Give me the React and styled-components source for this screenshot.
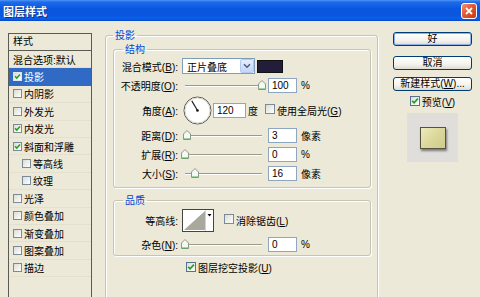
import React from "react";
import styled, { createGlobalStyle } from "styled-components";

const Global = createGlobalStyle`
  html, body { margin: 0; padding: 0; background: #ECE9D8; }
  body {
    font-family: "Liberation Sans", "Noto Sans CJK SC", sans-serif;
    font-size: 10px;
    color: #000;
  }
`;

const CJK = `"Liberation Sans", "Noto Sans CJK SC", sans-serif`;

const Window = styled.div`
  width: 480px;
  height: 297px;
  overflow: hidden;
  display: flex;
  flex-direction: column;
  background: #ECE9D8;
`;

const TitleBar = styled.div`
  height: 21px;
  flex: 0 0 21px;
  display: flex;
  align-items: center;
  justify-content: space-between;
  padding: 0 3px 0 3px;
  box-sizing: border-box;
  background: linear-gradient(180deg, #4d95f5 0%, #1f6aea 10%, #0b58e0 40%, #0a56dd 70%, #0b5fe8 90%, #0446c6 100%);
`;

const Title = styled.div`
  color: #fff;
  font-weight: bold;
  font-size: 11px;
  font-family: "Noto Sans CJK SC", sans-serif;
  text-shadow: 1px 1px 0 #0b2d86;
`;

const CloseBtn = styled.div`
  width: 16px;
  height: 16px;
  box-sizing: border-box;
  border: 1px solid #fff;
  border-radius: 3px;
  background: linear-gradient(135deg, #f0947a 0%, #e2582f 45%, #c83a12 100%);
  display: flex;
  align-items: center;
  justify-content: center;
`;

const Body = styled.div`
  flex: 1 0 auto;
  min-height: 290px;
  display: flex;
  align-items: stretch;
  padding: 8px 8px 0 8px;
`;

/* ---------- left list ---------- */
const List = styled.div`
  width: 84px;
  flex: 0 0 84px;
  box-sizing: border-box;
  margin-top: 4px;
  border: 1px solid #5b5b55;
  font-family: ${CJK};
`;

const ListHeader = styled.div`
  height: 16px;
  line-height: 16px;
  padding-left: 4px;
  border-bottom: 1px solid #5b5b55;
`;

const Item = styled.div`
  height: 17.4px;
  box-sizing: border-box;
  display: flex;
  align-items: center;
  gap: 2px;
  padding-left: ${(p) => (p.$indent ? 13 : 4)}px;
  background: ${(p) => (p.$selected ? "#316AC5" : "transparent")};
  color: ${(p) => (p.$selected ? "#fff" : "#000")};
  white-space: nowrap;
  border-bottom: 1px solid ${(p) => (p.$selected ? "#316AC5" : "#e3e0d0")};
`;

/* ---------- checkbox ---------- */
const Box = styled.span`
  display: inline-flex;
  align-items: center;
  justify-content: center;
  width: ${(p) => p.$size}px;
  height: ${(p) => p.$size}px;
  flex: 0 0 auto;
  box-sizing: border-box;
  border: 1px solid ${(p) => p.$border};
  background: linear-gradient(135deg, #dcdcd6 0%, #f4f4f1 70%, #fff 100%);
`;

function Check({ checked, size = 10, border = "#56708f" }) {
  return (
    <Box $size={size} $border={border}>
      {checked && (
        <svg width={size - 2} height={size - 2} viewBox="0 0 8 8">
          <path d="M1.2 3.8 L3.1 5.8 L6.9 1.6" stroke="#21a121" strokeWidth="1.7" fill="none" />
        </svg>
      )}
    </Box>
  );
}

/* ---------- middle ---------- */
const Middle = styled.div`
  width: 273px;
  flex: 0 0 273px;
  margin-left: 13px;
  display: flex;
  flex-direction: column;
`;

const Group = styled.fieldset`
  margin: ${(p) => p.$mt || 0}px 0 0 0;
  padding: ${(p) => p.$pad};
  min-width: 0;
  border: 1px solid #c6c4b4;
  border-radius: 3px;
  box-shadow: inset 1px 1px 0 #fff, 1px 1px 0 #fff;
  flex: ${(p) => (p.$grow ? "1 0 auto" : "0 0 auto")};
  display: flex;
  flex-direction: column;
`;

const Legend = styled.legend`
  color: #0046D5;
  font-family: "Noto Sans CJK SC", sans-serif;
  font-size: 10px;
  line-height: 12px;
  padding: 0 2px;
  margin-left: ${(p) => p.$ml || 0}px;
`;

const Rows = styled.div`
  display: flex;
  flex-direction: column;
  gap: ${(p) => p.$gap}px;
`;

const Row = styled.div`
  display: flex;
  align-items: center;
  height: ${(p) => p.$h}px;
  padding-left: ${(p) => p.$pl || 0}px;
  white-space: nowrap;
`;

const Label = styled.span`
  width: 64px;
  flex: 0 0 64px;
  margin-right: 4px;
  text-align: right;
  white-space: nowrap;
`;

const U = styled.span`
  text-decoration: underline;
`;

const Select = styled.div`
  width: 73px;
  height: 16px;
  box-sizing: border-box;
  border: 1px solid #7f9db9;
  background: #fff;
  display: flex;
  align-items: center;
`;

const SelectText = styled.span`
  flex: 1;
  padding-left: 4px;
`;

const SelectArrow = styled.span`
  width: 14px;
  height: 14px;
  box-sizing: border-box;
  border: 1px solid #b5c8f2;
  border-radius: 2px;
  background: linear-gradient(180deg, #e6eefc 0%, #c4d5f8 100%);
  display: flex;
  align-items: center;
  justify-content: center;
`;

const Swatch = styled.span`
  width: 26px;
  height: 13px;
  margin-left: 2px;
  box-sizing: border-box;
  border: 1px solid #111;
  background: #211d3b;
`;

const SliderWrap = styled.div`
  position: relative;
  width: 84px;
  height: 12px;
  margin-right: 2px;
  flex: 0 0 84px;
`;

const Track = styled.div`
  position: absolute;
  left: 3px;
  right: 4px;
  top: 6px;
  height: 1px;
  background: #9c9a8c;
  box-shadow: 0 1px 0 #fff;
`;

const Thumb = styled.svg`
  position: absolute;
  top: 1px;
  margin-left: -4px;
`;

function Slider({ pos }) {
  return (
    <SliderWrap>
      <Track />
      <Thumb width="8" height="10" viewBox="0 0 8 10" style={{ left: `${3 + pos * 77}px` }}>
        <path d="M0.5 9.5 V4 L4 0.5 L7.5 4 V9.5 Z" fill="#f7f7f4" stroke="#8b9a86" />
        <path d="M1 9 H7" stroke="#3eb34a" strokeWidth="1" />
      </Thumb>
    </SliderWrap>
  );
}

const Input = styled.div`
  width: ${(p) => p.$w}px;
  height: 15px;
  box-sizing: border-box;
  border: 1px solid #8ea6c0;
  background: #fff;
  padding-left: 3px;
  line-height: 13px;
  font-size: 10px;
`;

const Unit = styled.span`
  margin-left: ${(p) => p.$ml || 4}px;
`;

const Dial = styled.svg`
  margin-left: 1px;
  margin-right: 1px;
  flex: 0 0 auto;
`;

const Picker = styled.svg`
  flex: 0 0 auto;
`;

const CheckLabel = styled.span`
  margin-left: ${(p) => p.$ml || 2}px;
`;

/* ---------- right column ---------- */
const Side = styled.div`
  width: 79px;
  flex: 0 0 79px;
  margin-left: 15px;
  padding-top: 3px;
  display: flex;
  flex-direction: column;
  font-family: ${CJK};
`;

const Button = styled.div`
  height: 14px;
  margin-top: ${(p) => p.$mt || 0}px;
  box-sizing: border-box;
  border: 1px solid #003c74;
  border-radius: 3px;
  background: linear-gradient(180deg, #ffffff 0%, #f4f3ee 60%, #dedbd0 100%);
  box-shadow: ${(p) => (p.$default ? "inset 0 0 0 1px #8fb2ea" : "none")};
  display: flex;
  align-items: center;
  justify-content: center;
  line-height: 12px;
  white-space: nowrap;
`;

const PreviewRow = styled.div`
  margin-top: 4px;
  height: 12px;
  display: flex;
  align-items: center;
  justify-content: center;
`;

const PreviewBox = styled.div`
  margin: 6px auto 0 auto;
  width: 51px;
  height: 49px;
  background: #dfdeda;
  display: flex;
  align-items: center;
  justify-content: center;
`;

const PreviewSwatch = styled.div`
  width: 26px;
  height: 22px;
  box-sizing: border-box;
  border: 1px solid #55543a;
  background: linear-gradient(135deg, #ecebbc 0%, #dcd89c 50%, #cfcb8c 100%);
  box-shadow: 1px 2px 2px rgba(40, 38, 50, 0.55);
`;

const listItems = [
  { text: "投影", checked: true, selected: true },
  { text: "内阴影" },
  { text: "外发光" },
  { text: "内发光", checked: true },
  { text: "斜面和浮雕", checked: true },
  { text: "等高线", indent: true },
  { text: "纹理", indent: true },
  { text: "光泽" },
  { text: "颜色叠加" },
  { text: "渐变叠加" },
  { text: "图案叠加" },
  { text: "描边" },
];

const sizeRows = [
  { label: "距离", key: "D", value: "3", unit: "像素", pos: 2 / 77 },
  { label: "扩展", key: "R", value: "0", unit: "%", pos: 0 },
  { label: "大小", key: "S", value: "16", unit: "像素", pos: 10 / 77 },
];

export default function App() {
  return (
    <>
      <Global />
      <Window>
        <TitleBar>
          <Title>图层样式</Title>
          <CloseBtn>
            <svg width="8" height="8" viewBox="0 0 8 8">
              <path d="M1 1 L7 7 M7 1 L1 7" stroke="#fff" strokeWidth="1.8" />
            </svg>
          </CloseBtn>
        </TitleBar>
        <Body>
          <List>
            <ListHeader>样式</ListHeader>
            <Item>混合选项:默认</Item>
            {listItems.map((it) => (
              <Item key={it.text} $indent={it.indent} $selected={it.selected}>
                <Check checked={it.checked} size={9} border={it.selected ? "#dfe6f3" : "#7b8a99"} />
                {it.text}
              </Item>
            ))}
          </List>

          <Middle>
            <Group $grow $pad="1px 6px 0 7px">
              <Legend>投影</Legend>
              <Group $pad="2px 0 5px 0" $mt={1}>
                <Legend $ml={9}>结构</Legend>
                <Rows $gap={1}>
                  <Row $h={18}>
                    <Label>
                      混合模式(<U>B</U>):
                    </Label>
                    <Select>
                      <SelectText>正片叠底</SelectText>
                      <SelectArrow>
                        <svg width="8" height="6" viewBox="0 0 8 6">
                          <path d="M1 1.2 L4 4.2 L7 1.2" stroke="#4d6185" strokeWidth="1.6" fill="none" />
                        </svg>
                      </SelectArrow>
                    </Select>
                    <Swatch />
                  </Row>
                  <Row $h={18}>
                    <Label>
                      不透明度(<U>O</U>):
                    </Label>
                    <Slider pos={1} />
                    <Input $w={29}>100</Input>
                    <Unit>%</Unit>
                  </Row>
                  <Row $h={30}>
                    <Label>
                      角度(<U>A</U>):
                    </Label>
                    <Dial width="29" height="29" viewBox="0 0 29 29">
                      <circle cx="14.5" cy="14.5" r="13.5" fill="#fff" stroke="#55554f" strokeWidth="1" />
                      <circle cx="14.5" cy="14.5" r="12.5" fill="none" stroke="#d8d6cc" strokeWidth="1" />
                      <line x1="14.5" y1="14.5" x2="8.8" y2="4.9" stroke="#222" strokeWidth="1.2" />
                      <circle cx="14.5" cy="14.5" r="1.3" fill="#111" />
                    </Dial>
                    <Input $w={33}>120</Input>
                    <Unit $ml={2}>度</Unit>
                    <CheckLabel $ml={7}>
                      <Check size={10} border="#7b8a99" />
                    </CheckLabel>
                    <CheckLabel>
                      使用全局光(<U>G</U>)
                    </CheckLabel>
                  </Row>
                  {sizeRows.map((r) => (
                    <Row $h={18} key={r.key}>
                      <Label>
                        {r.label}(<U>{r.key}</U>):
                      </Label>
                      <Slider pos={r.pos} />
                      <Input $w={29}>{r.value}</Input>
                      <Unit>{r.unit}</Unit>
                    </Row>
                  ))}
                </Rows>
              </Group>

              <Group $pad="2px 0 2px 0" $mt={6}>
                <Legend $ml={9}>品质</Legend>
                <Rows $gap={3}>
                  <Row $h={24}>
                    <Label>等高线:</Label>
                    <Picker width="32" height="23" viewBox="0 0 32 23">
                      <rect x="0.5" y="0.5" width="31" height="22" fill="#fff" stroke="#45453f" />
                      <polygon points="2,21 23,2 23,21" fill="#aaa89c" />
                      <line x1="23.5" y1="1" x2="23.5" y2="22" stroke="#d6d4c8" />
                      <polygon points="25.5,5 29.5,5 27.5,7.5" fill="#000" />
                    </Picker>
                    <CheckLabel $ml={10}>
                      <Check size={10} border="#7b8a99" />
                    </CheckLabel>
                    <CheckLabel>
                      消除锯齿(<U>L</U>)
                    </CheckLabel>
                  </Row>
                  <Row $h={18}>
                    <Label>
                      杂色(<U>N</U>):
                    </Label>
                    <Slider pos={0} />
                    <Input $w={29}>0</Input>
                    <Unit>%</Unit>
                  </Row>
                </Rows>
              </Group>

              <Row $h={14} $pl={73} style={{ marginTop: 4 }}>
                <Check checked size={10} border="#56708f" />
                <CheckLabel>
                  图层挖空投影(<U>U</U>)
                </CheckLabel>
              </Row>
            </Group>
          </Middle>

          <Side>
            <Button $default>好</Button>
            <Button $mt={10}>取消</Button>
            <Button $mt={7}>
              新建样式(<U>W</U>)...
            </Button>
            <PreviewRow>
              <Check checked size={10} border="#56708f" />
              <CheckLabel>
                预览(<U>V</U>)
              </CheckLabel>
            </PreviewRow>
            <PreviewBox>
              <PreviewSwatch />
            </PreviewBox>
          </Side>
        </Body>
      </Window>
    </>
  );
}
